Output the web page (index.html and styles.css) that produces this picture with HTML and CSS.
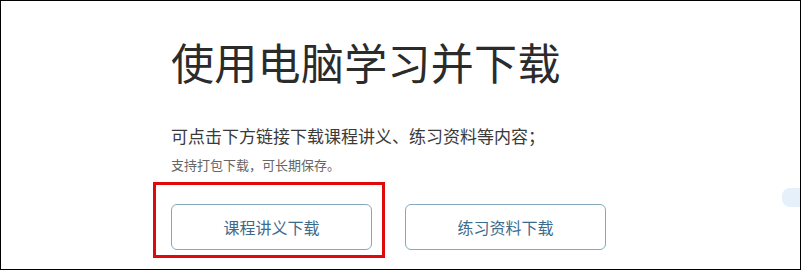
FILE: index.html
```html
<!DOCTYPE html>
<html lang="zh-CN">
<head>
    <meta charset="UTF-8">
    <meta name="viewport" content="width=device-width, initial-scale=1.0">
    <title>使用电脑学习并下载</title>
    <link rel="stylesheet" href="styles.css">
</head>
<body>
  <div class="frame">
    <div class="content">
      <h1 class="title">使用电脑学习并下载</h1>
      <p class="lead">可点击下方链接下载课程讲义、练习资料等内容；</p>
      <p class="note">支持打包下载，可长期保存。</p>
      <div class="actions">
        <div class="mark">
          <button class="btn">课程讲义下载</button>
          <span class="mark-box"></span>
        </div>
        <button class="btn">练习资料下载</button>
      </div>
    </div>
    <span class="side-tab"></span>
  </div>
</body>
</html>
```

FILE: styles.css
```css
body {
    margin: 0;
    background-color: #ffffff;
    font-family: "Noto Sans CJK SC", "Noto Sans", sans-serif;
}

.frame {
    position: relative;
    width: 799px;
    height: 268px;
    border: 1px solid #000000;
    overflow: hidden;
}

.content {
    padding: 39px 0 0 170px;
}

.title {
    margin: 0;
    font-size: 43px;
    line-height: 43px;
    font-weight: 400;
    color: #2b2b2b;
    letter-spacing: 0.3px;
}

.lead {
    margin: 44px 0 0;
    font-size: 17px;
    line-height: 17px;
    color: #3a3a3a;
}

.note {
    margin: 14px 0 0;
    font-size: 13px;
    line-height: 13px;
    color: #666666;
}

.actions {
    display: flex;
    gap: 33px;
    margin-top: 33px;
}

.mark {
    position: relative;
}

.mark-box {
    position: absolute;
    left: -18px;
    top: -22px;
    right: -13px;
    bottom: -8px;
    border: 3px solid #e00a0a;
}

.btn {
    width: 201px;
    height: 46px;
    padding: 0;
    border: 1px solid #86a8bd;
    border-radius: 6px;
    background-color: #ffffff;
    font-family: "Noto Sans CJK SC", "Noto Sans", sans-serif;
    font-size: 16px;
    color: #3d6b8c;
    cursor: pointer;
}

.side-tab {
    position: absolute;
    right: -10px;
    top: 187px;
    width: 28px;
    height: 19px;
    border-radius: 8px;
    background-color: #e6f0fa;
}
```
